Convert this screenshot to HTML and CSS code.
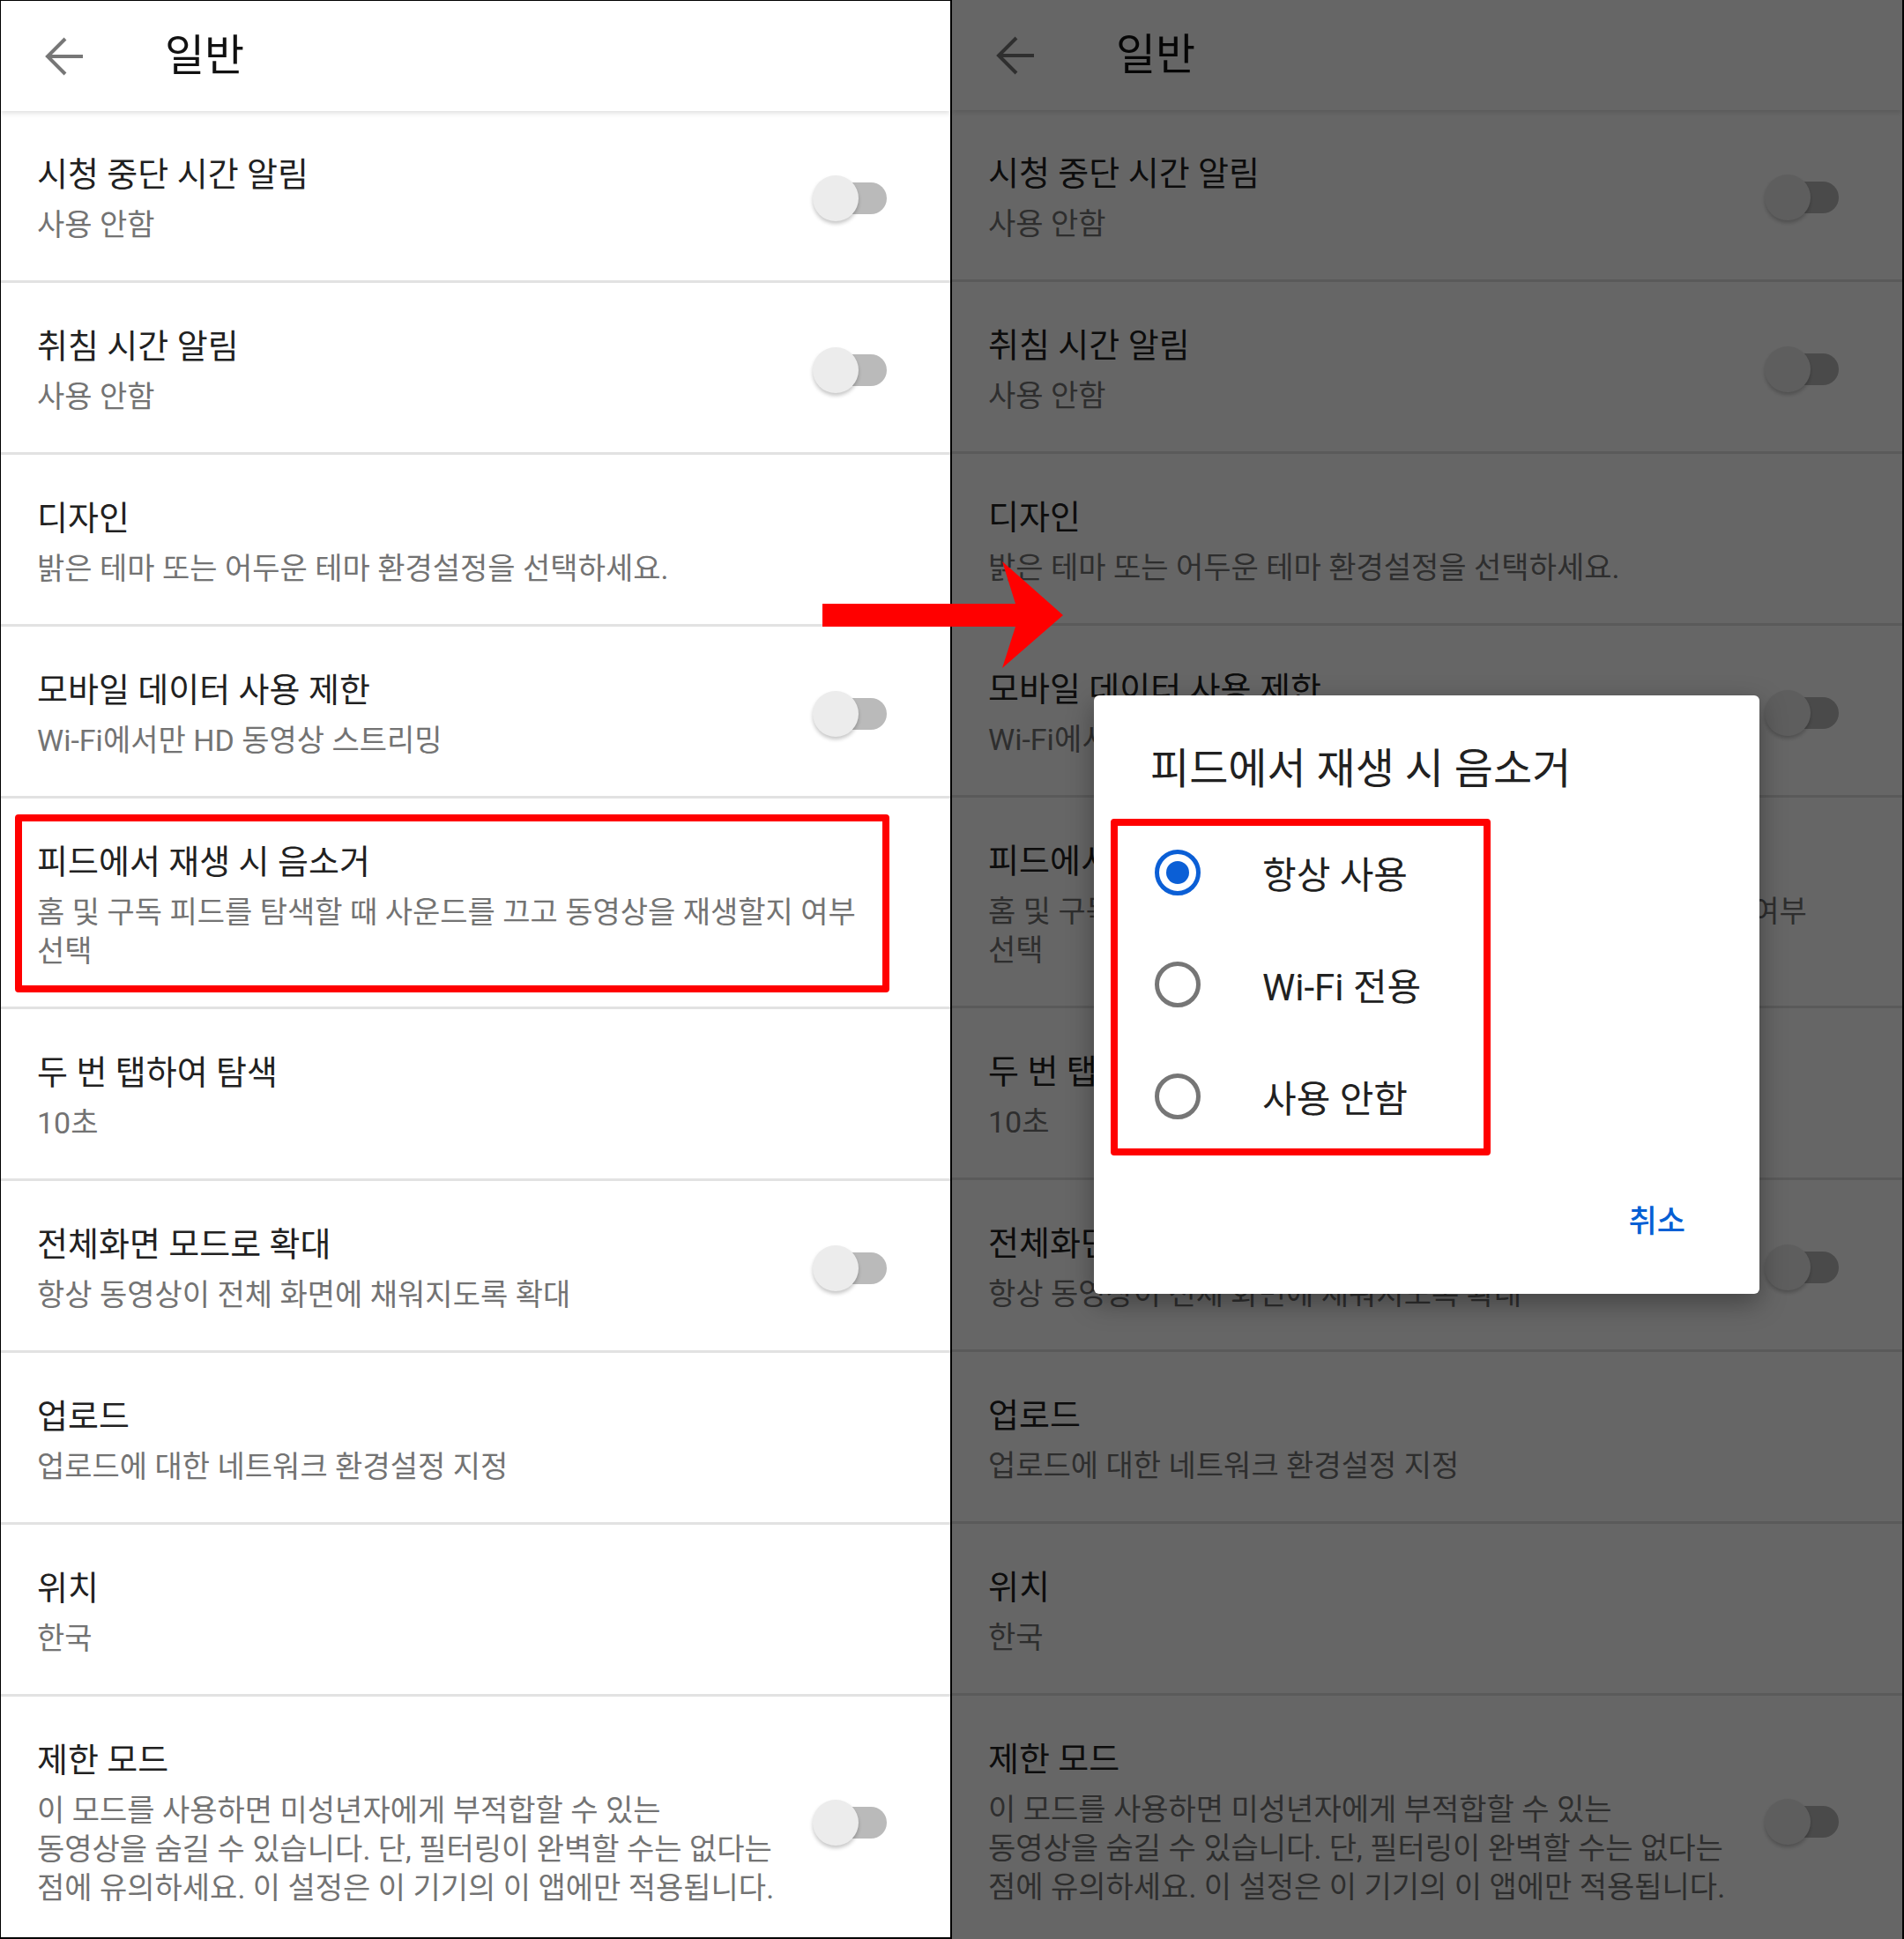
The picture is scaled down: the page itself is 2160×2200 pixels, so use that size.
FILE: index.html
```html
<!DOCTYPE html>
<html lang="ko">
<head>
    <meta charset="UTF-8">
    <meta name="viewport" content="width=device-width, initial-scale=1.0">
    <title>일반 설정</title>
    <link rel="stylesheet" href="styles.css">
</head>
<body>
    <div class="screens">
        <!-- 왼쪽: 일반 설정 목록 -->
        <section class="screen">
            <header class="appbar">
                <svg class="back" viewBox="0 0 48 48" width="48" height="48">
                    <path d="M44 24H4M24 4L4 24l20 20" fill="none" stroke="currentColor" stroke-width="4"/>
                </svg>
                <h1>일반</h1>
            </header>
            <ul class="settings">
                <li class="setting">
                    <div class="setting-text">
                        <p class="setting-title">시청 중단 시간 알림</p>
                        <p class="setting-summary">사용 안함</p>
                    </div>
                    <span class="switch"></span>
                </li>
                <li class="setting">
                    <div class="setting-text">
                        <p class="setting-title">취침 시간 알림</p>
                        <p class="setting-summary">사용 안함</p>
                    </div>
                    <span class="switch"></span>
                </li>
                <li class="setting">
                    <div class="setting-text">
                        <p class="setting-title">디자인</p>
                        <p class="setting-summary">밝은 테마 또는 어두운 테마 환경설정을 선택하세요.</p>
                    </div>
                </li>
                <li class="setting">
                    <div class="setting-text">
                        <p class="setting-title">모바일 데이터 사용 제한</p>
                        <p class="setting-summary">Wi-Fi에서만 HD 동영상 스트리밍</p>
                    </div>
                    <span class="switch"></span>
                </li>
                <li class="setting">
                    <div class="setting-text">
                        <p class="setting-title">피드에서 재생 시 음소거</p>
                        <p class="setting-summary">홈 및 구독 피드를 탐색할 때 사운드를 끄고 동영상을 재생할지 여부 선택</p>
                    </div>
                    <span class="mark mark-row"></span>
                </li>
                <li class="setting">
                    <div class="setting-text">
                        <p class="setting-title">두 번 탭하여 탐색</p>
                        <p class="setting-summary">10초</p>
                    </div>
                </li>
                <li class="setting">
                    <div class="setting-text">
                        <p class="setting-title">전체화면 모드로 확대</p>
                        <p class="setting-summary">항상 동영상이 전체 화면에 채워지도록 확대</p>
                    </div>
                    <span class="switch"></span>
                </li>
                <li class="setting">
                    <div class="setting-text">
                        <p class="setting-title">업로드</p>
                        <p class="setting-summary">업로드에 대한 네트워크 환경설정 지정</p>
                    </div>
                </li>
                <li class="setting">
                    <div class="setting-text">
                        <p class="setting-title">위치</p>
                        <p class="setting-summary">한국</p>
                    </div>
                </li>
                <li class="setting">
                    <div class="setting-text">
                        <p class="setting-title">제한 모드</p>
                        <p class="setting-summary">이 모드를 사용하면 미성년자에게 부적합할 수 있는<br>동영상을 숨길 수 있습니다. 단, 필터링이 완벽할 수는 없다는<br>점에 유의하세요. 이 설정은 이 기기의 이 앱에만 적용됩니다.</p>
                    </div>
                    <span class="switch"></span>
                </li>
            </ul>
        </section>

        <!-- 오른쪽: 같은 목록 위에 선택 대화상자 -->
        <section class="screen screen-dimmed">
            <header class="appbar">
                <svg class="back" viewBox="0 0 48 48" width="48" height="48">
                    <path d="M44 24H4M24 4L4 24l20 20" fill="none" stroke="currentColor" stroke-width="4"/>
                </svg>
                <h1>일반</h1>
            </header>
            <ul class="settings">
                <li class="setting">
                    <div class="setting-text">
                        <p class="setting-title">시청 중단 시간 알림</p>
                        <p class="setting-summary">사용 안함</p>
                    </div>
                    <span class="switch"></span>
                </li>
                <li class="setting">
                    <div class="setting-text">
                        <p class="setting-title">취침 시간 알림</p>
                        <p class="setting-summary">사용 안함</p>
                    </div>
                    <span class="switch"></span>
                </li>
                <li class="setting">
                    <div class="setting-text">
                        <p class="setting-title">디자인</p>
                        <p class="setting-summary">밝은 테마 또는 어두운 테마 환경설정을 선택하세요.</p>
                    </div>
                </li>
                <li class="setting">
                    <div class="setting-text">
                        <p class="setting-title">모바일 데이터 사용 제한</p>
                        <p class="setting-summary">Wi-Fi에서만 HD 동영상 스트리밍</p>
                    </div>
                    <span class="switch"></span>
                </li>
                <li class="setting">
                    <div class="setting-text">
                        <p class="setting-title">피드에서 재생 시 음소거</p>
                        <p class="setting-summary">홈 및 구독 피드를 탐색할 때 사운드를 끄고 동영상을 재생할지 여부 선택</p>
                    </div>
                </li>
                <li class="setting">
                    <div class="setting-text">
                        <p class="setting-title">두 번 탭하여 탐색</p>
                        <p class="setting-summary">10초</p>
                    </div>
                </li>
                <li class="setting">
                    <div class="setting-text">
                        <p class="setting-title">전체화면 모드로 확대</p>
                        <p class="setting-summary">항상 동영상이 전체 화면에 채워지도록 확대</p>
                    </div>
                    <span class="switch"></span>
                </li>
                <li class="setting">
                    <div class="setting-text">
                        <p class="setting-title">업로드</p>
                        <p class="setting-summary">업로드에 대한 네트워크 환경설정 지정</p>
                    </div>
                </li>
                <li class="setting">
                    <div class="setting-text">
                        <p class="setting-title">위치</p>
                        <p class="setting-summary">한국</p>
                    </div>
                </li>
                <li class="setting">
                    <div class="setting-text">
                        <p class="setting-title">제한 모드</p>
                        <p class="setting-summary">이 모드를 사용하면 미성년자에게 부적합할 수 있는<br>동영상을 숨길 수 있습니다. 단, 필터링이 완벽할 수는 없다는<br>점에 유의하세요. 이 설정은 이 기기의 이 앱에만 적용됩니다.</p>
                    </div>
                    <span class="switch"></span>
                </li>
            </ul>

            <div class="scrim"></div>

            <div class="dialog">
                <h2 class="dialog-title">피드에서 재생 시 음소거</h2>
                <ul class="options">
                    <li class="option"><span class="radio checked"></span>항상 사용</li>
                    <li class="option"><span class="radio"></span>Wi-Fi 전용</li>
                    <li class="option"><span class="radio"></span>사용 안함</li>
                </ul>
                <div class="dialog-actions">
                    <button type="button">취소</button>
                </div>
                <span class="mark mark-options"></span>
            </div>
        </section>

        <svg class="pointer" viewBox="0 0 274 122" width="274" height="122">
            <polygon points="0,48 219,48 204,0 273,61 204,121 219,74 0,74" fill="#ff0000"/>
        </svg>
    </div>
</body>
</html>
```

FILE: styles.css
```css
* {
    margin: 0;
    padding: 0;
    box-sizing: border-box;
}

body {
    background: #000;
    font-family: Roboto, "Noto Sans CJK KR", sans-serif;
}

.screens {
    position: relative;
    display: flex;
    width: 2160px;
    height: 2200px;
    overflow: hidden;
}

.screen {
    position: relative;
    width: 1080px;
    height: 2200px;
    overflow: hidden;
    background: #fff;
    border-right: 2px solid #000;
}

.screen:first-child {
    border-left: 1px solid #000;
    border-top: 1px solid #000;
    border-bottom: 2px solid #000;
}

/* 상단 바 */
.appbar {
    position: relative;
    z-index: 1;
    display: flex;
    align-items: center;
    height: 125px;
    padding-left: 49px;
    background: #fff;
    box-shadow: 0 2px 6px rgba(0, 0, 0, 0.14);
}

.back {
    color: #777;
    width: 48px;
    height: 48px;
}

.appbar h1 {
    margin-left: 89px;
    font-size: 49px;
    font-weight: 400;
    color: #111;
    line-height: 1;
}

/* 설정 목록 */
.settings {
    list-style: none;
}

.setting {
    position: relative;
    display: flex;
    align-items: center;
    gap: 36px;
    padding: 46px 72px 41px 41px;
    border-bottom: 3px solid #e2e2e2;
}

.setting-text {
    flex: 1;
    word-break: keep-all;
}

.setting-title {
    font-size: 38px;
    line-height: 52px;
    color: #212121;
    margin-bottom: 9px;
}

.setting-summary {
    font-size: 34px;
    line-height: 44px;
    color: #737373;
}

/* 꺼진 상태의 스위치 */
.switch {
    position: relative;
    flex: none;
    width: 84px;
    height: 52px;
}

.switch::before {
    content: "";
    position: absolute;
    right: 0;
    top: 8px;
    width: 72px;
    height: 36px;
    border-radius: 18px;
    background: #bababa;
}

.switch::after {
    content: "";
    position: absolute;
    left: 0;
    top: 0;
    width: 52px;
    height: 52px;
    border-radius: 50%;
    background: #ececec;
    box-shadow: 0 3px 4px rgba(0, 0, 0, 0.22);
}

/* 빨간 강조 테두리 */
.mark {
    position: absolute;
    z-index: 1;
    border: 8px solid #ff0000;
    border-radius: 4px;
}

.mark-row {
    left: 16px;
    top: 18px;
    width: 992px;
    height: 202px;
}

.mark-options {
    left: 19px;
    top: 140px;
    width: 431px;
    height: 382px;
}

.pointer {
    position: absolute;
    z-index: 4;
    left: 933px;
    top: 637px;
}

/* 어둡게 깔린 배경 */
.scrim {
    position: absolute;
    z-index: 2;
    inset: 0;
    background: rgba(0, 0, 0, 0.6);
}

/* 선택 대화상자 */
.dialog {
    position: absolute;
    z-index: 3;
    left: 161px;
    top: 789px;
    width: 755px;
    padding-top: 52px;
    background: #fff;
    border-radius: 6px;
    box-shadow: 0 10px 30px rgba(0, 0, 0, 0.35);
}

.dialog-title {
    padding-left: 64px;
    font-size: 48px;
    font-weight: 400;
    line-height: 64px;
    color: #212121;
}

.options {
    list-style: none;
    margin-top: 21px;
}

.option {
    display: flex;
    align-items: center;
    gap: 70px;
    height: 127px;
    padding-left: 69px;
    font-size: 42px;
    color: #212121;
}

.radio {
    flex: none;
    width: 52px;
    height: 52px;
    border: 5px solid #767676;
    border-radius: 50%;
}

.radio.checked {
    border-color: #0b5fd6;
    padding: 8px;
}

.radio.checked::after {
    content: "";
    display: block;
    width: 100%;
    height: 100%;
    border-radius: 50%;
    background: #0b5fd6;
}

.dialog-actions {
    display: flex;
    justify-content: flex-end;
    padding: 58px 84px 59px 0;
}

.dialog-actions button {
    border: none;
    background: none;
    font-family: inherit;
    font-size: 35px;
    font-weight: 500;
    line-height: 44px;
    color: #065fd4;
}
```
